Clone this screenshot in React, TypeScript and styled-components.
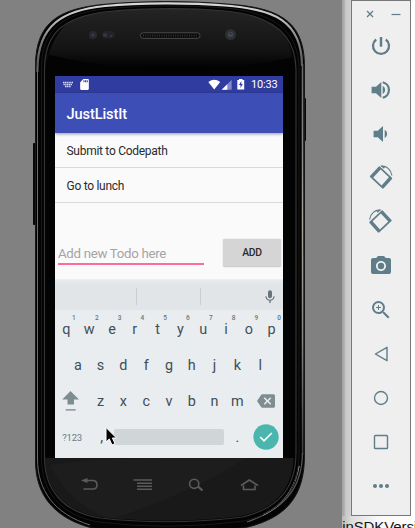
import React from "react";
import styled, { createGlobalStyle } from "styled-components";
import { MdCameraAlt, MdZoomIn, MdMic, MdBackspace, MdSdCard } from "react-icons/md";

const GlobalStyle = createGlobalStyle`
  * { box-sizing: border-box; }
  body { margin: 0; overflow: hidden; font-family: Roboto, sans-serif; background: #fff; }
  svg { display: block; flex: none; }
`;

const Desktop = styled.div`
  display: flex;
  width: 415px;
  height: 528px;
  overflow: hidden;
`;

const DeviceArea = styled.main`
  position: relative;
  width: 342px;
  flex: none;
  background: #818181;
  padding-top: 76px;
`;

const DeviceArt = styled.svg`
  position: absolute;
  left: 0;
  top: 0;
`;

const Screen = styled.section`
  position: relative;
  width: 228px;
  height: 382px;
  margin-left: 55px;
  background: #fafafa;
  display: flex;
  flex-direction: column;
  color: #2b2b2b;
`;

const StatusBar = styled.div`
  height: 17px;
  flex: none;
  background: #303c9f;
  display: flex;
  align-items: center;
  padding: 0 5.5px 0 8px;
  color: #fff;
`;

const StatusSpacer = styled.div`
  flex: 1;
`;

const SdCardSlot = styled.span`
  margin-left: 5px;
`;

const Clock = styled.span`
  margin-left: 5px;
  font-size: 11px;
  letter-spacing: -0.2px;
  line-height: 18px;
  padding-top: 1px;
`;

const AppBar = styled.header`
  height: 40px;
  flex: none;
  background: #3d4eb7;
  color: #fff;
  font-size: 14.6px;
  font-weight: 500;
  letter-spacing: -0.1px;
  line-height: 42px;
  padding-left: 11.5px;
  box-shadow: 0 1px 3px rgba(0, 0, 0, 0.4);
  z-index: 1;
`;

const TodoList = styled.ul`
  list-style: none;
  margin: 0;
  padding: 0;
  height: 97px;
  flex: none;
`;

const TodoItem = styled.li`
  height: 35px;
  border-bottom: 1px solid #dadada;
  padding-left: 11.5px;
  font-size: 12px;
  letter-spacing: -0.28px;
  line-height: 36px;

  & + & {
    line-height: 37px;
  }
`;

const EntryRow = styled.form`
  height: 49px;
  flex: none;
  display: flex;
  justify-content: space-between;
  align-items: flex-start;
  padding: 9px 2px 0 3px;
`;

const EntryField = styled.div`
  width: 146px;
  height: 26px;
  border-bottom: 2px solid #f96c9b;
  color: #a4a4a4;
  font-size: 13.25px;
  letter-spacing: -0.3px;
  line-height: 30px;
  white-space: nowrap;
`;

const AddButton = styled.button`
  width: 58px;
  height: 27px;
  border: 0;
  border-radius: 1.5px;
  padding: 0;
  background: #d5d5d5;
  color: #2b2b2b;
  font: 500 10.4px Roboto, sans-serif;
  letter-spacing: -0.25px;
  box-shadow: 0 0.5px 1.5px rgba(0, 0, 0, 0.22);
`;

const Keyboard = styled.div`
  flex: 1;
  display: flex;
  flex-direction: column;
  background: #e9edf0;
  border-top: 1px solid #eeeeee;
`;

const SuggestionStrip = styled.div`
  height: 30px;
  flex: none;
  background: linear-gradient(#e9ebec, #e1e5e8 4px);
  display: grid;
  grid-template-columns: 82px 64px 1fr;
  align-items: center;
`;

const Suggestion = styled.div`
  height: 17px;
  margin-top: 3px;
  border-right: 1px solid #c9ced1;
`;

const MicSlot = styled.div`
  display: flex;
  justify-content: flex-end;
  padding: 3px 5px 0 0;
  color: #66757c;
`;

const KeyRows = styled.div`
  padding-top: 1px;
`;

const KeyRow = styled.div<{ $inset?: number }>`
  height: 36px;
  display: flex;
  align-items: center;
  padding: 0 ${(p) => p.$inset ?? 0}px;
`;

const Key = styled.div<{ $width?: number; $small?: boolean }>`
  position: relative;
  width: ${(p) => p.$width ?? 22.8}px;
  flex: none;
  display: flex;
  justify-content: center;
  padding-top: ${(p) => (p.$small ? 1 : 2)}px;
  font-size: ${(p) => (p.$small ? 9.5 : 14.4)}px;
  letter-spacing: ${(p) => (p.$small ? "-0.15px" : "0")};
  line-height: 20px;
  color: ${(p) => (p.$small ? "#6d7b82" : "#3f4f57")};
`;

const IconKey = styled.div<{ $width: number }>`
  width: ${(p) => p.$width}px;
  flex: none;
  display: flex;
  justify-content: center;
`;

const KeyHint = styled.span`
  position: absolute;
  right: 2px;
  top: -3px;
  font-size: 6.5px;
  font-weight: 500;
  line-height: 7px;
  color: #66767d;
`;

const SpaceBar = styled.div`
  width: 110px;
  height: 16px;
  border-radius: 2px;
  background: #d0d5d8;
`;

const Cursor = styled.svg`
  position: absolute;
  left: 49px;
  top: 350px;
`;

const Side = styled.aside`
  width: 73px;
  display: flex;
  flex-direction: column;
`;

const SideTop = styled.div`
  height: 516px;
  flex: none;
  display: flex;
`;

const WindowEdge = styled.div`
  width: 9px;
  background: linear-gradient(90deg, #a5a5a5 0 1px, #bababa 3px, #cccccc 4px 7px, #d5d5d5);
`;

const Toolbar = styled.nav`
  width: 60px;
  background: #efefef;
  border: 1px solid #777;
  display: flex;
  flex-direction: column;
  align-items: center;
  color: #607d8a;
`;

const WindowControls = styled.div`
  height: 23px;
  width: 100%;
  flex: none;
  display: flex;
  align-items: center;
  gap: 17px;
  padding: 3px 0 0 14px;
`;

const ToolButton = styled.button`
  width: 44px;
  height: 44px;
  flex: none;
  display: grid;
  place-items: center;
  background: none;
  border: 0;
  padding: 0;
  color: inherit;
`;

const CodeLine = styled.div`
  height: 12px;
  overflow: hidden;
  background: linear-gradient(90deg, #bbb, #ddd 10px, #f8f8f8 35px, #fff);
  color: #151515;
  font: 15px/18px "Liberation Sans", sans-serif;
  letter-spacing: -0.1px;
  white-space: nowrap;
  display: flex;
`;

const CodeText = styled.span`
  margin: 2px 0 0 -8px;
`;

const HULL =
  "M35.5 66C35.5 20 62 9 102 4.5C140 .8 190 .8 224 3.8C275 7 304.5 18 304.5 66V455C304.5 496 287 517 248 527Q170 540 92 528C54 518 35.5 495 35.5 461Z";

const DeviceFrame = () => (
  <DeviceArt width="342" height="528" viewBox="0 0 342 528" fill="none">
    <defs>
      <linearGradient id="glassTop" x1="0" y1="0" x2="0" y2="1">
        <stop offset="0" stopColor="#242424" />
        <stop offset=".65" stopColor="#141414" />
        <stop offset="1" stopColor="#000" />
      </linearGradient>
      <linearGradient id="rim" x1="0" y1="0" x2="0" y2="1">
        <stop offset="0" stopColor="#d8d8d8" />
        <stop offset=".25" stopColor="#b8b8b8" />
        <stop offset=".6" stopColor="#777" />
        <stop offset="1" stopColor="#555" />
      </linearGradient>
      <linearGradient id="rightRim" gradientUnits="userSpaceOnUse" x1="0" y1="64" x2="0" y2="455">
        <stop offset="0" stopColor="#666" />
        <stop offset=".4" stopColor="#a8a29c" />
        <stop offset=".7" stopColor="#8a8682" />
        <stop offset="1" stopColor="#3c3c3c" />
      </linearGradient>
      <clipPath id="inner">
        <path d="M45 70C45 30 66 16 105 12C145 8 190 8 225 11C270 15 294 32 294 70V452C294 488 277 508 242 516Q170 525 100 517C63 511 45 488 45 457Z" />
      </clipPath>
    </defs>
    <rect x="33" y="143" width="4" height="82" rx="1" fill="#080808" />
    <rect x="303" y="98" width="3" height="43" rx="1" fill="#080808" />
    <path d={HULL} fill="#030303" stroke="#171717" strokeWidth="1" />
    <path d="M37.5 72C36.5 24 64 10 105 6C140 2.5 190 2.5 225 5.5C273 9 302 20 302 66" stroke="url(#rim)" strokeWidth="2.2" />
    <path d="M37.5 66V459C37.5 490 54 514 90 525" stroke="#6b6b6b" strokeWidth="1" />
    <path d="M302.5 64L302.6 455" stroke="url(#rightRim)" strokeWidth="1.6" />
    <path d="M302.5 453C302 489 284 509 247 522" stroke="#555" strokeWidth="1.3" />
    <path d="M299 466C295 489 284 505 263 515" stroke="#999" strokeWidth="1.4" />
    <g clipPath="url(#inner)">
      <path d="M45 70Q55 9 110 9H240Q291 15 294 70V57Q170 84 45 54Z" fill="url(#glassTop)" />
      <path d="M45 458H294V525H45Z" fill="#191919" />
      <path d="M50 465Q90 458 165 458H245Q205 487 110 520Q65 500 50 465Z" fill="#1d1d1d" />
    </g>
    <path d="M44.5 70C44.5 32 64 18 104 12C145 8 190 8 225 11C271 15 296 34 296 70V452C296 488 279 508 243 517Q170 526 100 518C62 512 44.5 489 44.5 457Z" stroke="#343434" strokeWidth="1.2" />
    <path d="M41.5 69C41.5 28 64 14 104 9C145 5 190 5 225 8C273 12 299 31 299 69V453C299 491 281 512 244 521Q170 531 98 522C60 515 41.5 491 41.5 458Z" stroke="#181818" />
    <circle cx="93" cy="35" r="4" fill="#292a2f" />
    <circle cx="93" cy="35" r="1.3" fill="#3c3e4c" />
    <rect x="102" y="31" width="13" height="7.5" rx="3.7" fill="#222328" />
    <circle cx="105" cy="35" r="2" fill="#343646" />
    <circle cx="111" cy="36" r="1" fill="#3b3d4b" />
    <rect x="140.5" y="32.8" width="59.5" height="5.5" rx="2.7" fill="#080808" stroke="#4d4d4d" />
    <path d="M143 35.6H198" stroke="#383838" strokeWidth="2" strokeDasharray="1 1.3" />
    <circle cx="230.5" cy="34.5" r="5.5" fill="#2d2f34" />
    <circle cx="230.5" cy="34.5" r="2.8" fill="#414550" />
    <circle cx="230.5" cy="33.5" r=".8" fill="#222" />
    <g stroke="#5b5b5b" strokeWidth="1.6">
      <path d="M87 480.5H93.5Q97 481 97 485T93 489H83.5" />
      <path d="M81 480.5L87.500 478V483Z" fill="#5b5b5b" stroke="none" />
      <path d="M133.5 480H152M137 483.3H152M137 486.3H152M137 489.3H152" />
      <circle cx="194.2" cy="483.8" r="4.6" />
      <path d="M198 486.5L202.5 490.5" strokeWidth="2.3" />
      <path d="M241 485.5L249.3 480L258 485.5M243.5 485.5V489.5H255V485.5" />
    </g>
  </DeviceArt>
);

const KeyboardGlyph = () => (
  <svg width="10" height="8" viewBox="0 0 10 8">
    <path d="M0 1.5H10M.5 3.5H9.5M2 5.5H8" stroke="#d9dcf2" strokeWidth="1.4" strokeDasharray="1.3 .5" />
  </svg>
);

const StatusGlyphs = () => (
  <svg width="38" height="13" viewBox="0 0 38 13">
    <path d="M.3 4Q6.2-.3 12.2 4L6.2 11.500Z" fill="#fff" />
    <path d="M23.7 1.8V11.8H13.7Z" fill="#8189c8" />
    <path d="M19.3 6.2V11.8H13.7Z" fill="#fff" />
    <path d="M31 1H34.5V2H36.2V11.5H29.3V2H31Z" fill="#fff" />
    <path d="M33.300 3L31 7H32.500V10L34.800 6H33.300Z" fill="#303c9f" />
  </svg>
);

const PowerGlyph = () => (
  <svg width="24" height="24" viewBox="0 0 24 24" fill="none" stroke="currentColor">
    <path d="M12 3V12.700" strokeWidth="2.500" />
    <path d="M7.200 5.500A8 8 0 1 0 16.800 5.500" strokeWidth="2.300" />
  </svg>
);

const VolumeUpGlyph = () => (
  <svg width="24" height="24" viewBox="0 0 24 24" fill="none" stroke="currentColor">
    <path d="M2.600 8.700V15.300H7L12.300 20V4L7 8.700Z" fill="currentColor" stroke="none" />
    <path d="M13.700 7.800A4.800 4.800 0 0 1 13.700 16.200Z" fill="currentColor" stroke="none" />
    <path d="M13.700 4.200A8 8 0 0 1 13.700 19.800" strokeWidth="2.200" />
  </svg>
);

const VolumeDownGlyph = () => (
  <svg width="24" height="24" viewBox="0 0 24 24" fill="currentColor">
    <path d="M4.600 8.800V15.200H8.800L14 20V4L8.800 8.800Z" />
    <path d="M15.700 7.800A4.800 4.800 0 0 1 15.700 16.200Z" />
  </svg>
);

const RotateGlyph = ({ flipped = false }: { flipped?: boolean }) => (
  <svg width="24" height="26" viewBox="0 0 24 26" fill="currentColor">
    <g transform={flipped ? "translate(23.5 0) scale(-1 1)" : undefined}>
      <path fillRule="evenodd" d="M9.800 1.400Q10.300 1 10.900 1.400L23 12.800Q23.400 13.400 23 14L14.500 23.400Q13.900 23.800 13.300 23.400L1 12Q.7 11.400 1 10.900ZM11.700 4.400L4.200 12.500L12.600 20.400L19.900 12.200Z" />
      <path d="M12 1.200C17.500.5 22 4.500 22.900 10.500" fill="none" stroke="currentColor" strokeWidth="1.200" />
      <path d="M11.500.6L16.500 1.200L14.800 3.800Z" />
    </g>
  </svg>
);

const BackGlyph = () => (
  <svg width="16" height="18" viewBox="0 0 16 18" fill="none" stroke="currentColor" strokeWidth="1.4">
    <path d="M14 2.300V15.700L2.400 9Z" strokeLinejoin="round" />
  </svg>
);

const HomeGlyph = () => (
  <svg width="16" height="16" viewBox="0 0 16 16" fill="none" stroke="currentColor" strokeWidth="1.4">
    <circle cx="8" cy="8" r="6.5" />
  </svg>
);

const OverviewGlyph = () => (
  <svg width="16" height="16" viewBox="0 0 16 16" fill="none" stroke="currentColor" strokeWidth="1.4">
    <rect x="1.5" y="1.5" width="13" height="13" rx=".8" />
  </svg>
);

const MoreGlyph = () => (
  <svg width="18" height="6" viewBox="0 0 18 6" fill="currentColor">
    <circle cx="3" cy="3" r="2" />
    <circle cx="9" cy="3" r="2" />
    <circle cx="15" cy="3" r="2" />
  </svg>
);

const tools: { name: string; icon: React.ReactNode }[] = [
  { name: "Power", icon: <PowerGlyph /> },
  { name: "Volume up", icon: <VolumeUpGlyph /> },
  { name: "Volume down", icon: <VolumeDownGlyph /> },
  { name: "Rotate left", icon: <RotateGlyph /> },
  { name: "Rotate right", icon: <RotateGlyph flipped /> },
  { name: "Take screenshot", icon: <MdCameraAlt size={24} /> },
  { name: "Zoom", icon: <MdZoomIn size={24} /> },
  { name: "Back", icon: <BackGlyph /> },
  { name: "Home", icon: <HomeGlyph /> },
  { name: "Overview", icon: <OverviewGlyph /> },
  { name: "More", icon: <MoreGlyph /> },
];

const topKeys = ["q", "w", "e", "r", "t", "y", "u", "i", "o", "p"];
const homeKeys = ["a", "s", "d", "f", "g", "h", "j", "k", "l"];
const lowerKeys = ["z", "x", "c", "v", "b", "n", "m"];

export default function App() {
  return (
    <>
      <GlobalStyle />
      <Desktop>
        <DeviceArea>
          <DeviceFrame />
          <Screen>
            <StatusBar>
              <KeyboardGlyph />
              <SdCardSlot><MdSdCard size={13} /></SdCardSlot>
              <StatusSpacer />
              <StatusGlyphs />
              <Clock>10:33</Clock>
            </StatusBar>
            <AppBar>JustListIt</AppBar>
            <TodoList>
              <TodoItem>Submit to Codepath</TodoItem>
              <TodoItem>Go to lunch</TodoItem>
            </TodoList>
            <EntryRow>
              <EntryField>Add new Todo here</EntryField>
              <AddButton type="button">ADD</AddButton>
            </EntryRow>
            <Keyboard>
              <SuggestionStrip>
                <Suggestion />
                <Suggestion />
                <MicSlot><MdMic size={16} /></MicSlot>
              </SuggestionStrip>
              <KeyRows>
                <KeyRow>
                  {topKeys.map((key, i) => (
                    <Key key={key}>{key}<KeyHint>{(i + 1) % 10}</KeyHint></Key>
                  ))}
                </KeyRow>
                <KeyRow $inset={11.4}>
                  {homeKeys.map((key) => <Key key={key}>{key}</Key>)}
                </KeyRow>
                <KeyRow>
                  <IconKey $width={34.2}>
                    <svg width="20" height="20" viewBox="0 0 20 20" fill="#7f8d93">
                      <path d="M8.500 0L17 8.500H12V13.500H5.500V8.500H.2Z" />
                      <path d="M3.700 18H13.700V19.700H3.700Z" fill="#94a0a5" />
                    </svg>
                  </IconKey>
                  {lowerKeys.map((key) => <Key key={key}>{key}</Key>)}
                  <IconKey $width={34.2}><MdBackspace size={18} color="#7f8d93" /></IconKey>
                </KeyRow>
                <KeyRow>
                  <Key $width={34.2} $small>?123</Key>
                  <Key $width={24.8}>,</Key>
                  <SpaceBar />
                  <Key $width={27}>.</Key>
                  <IconKey $width={30}>
                    <svg width="26" height="26" viewBox="0 0 26 26" fill="none">
                      <circle cx="13" cy="13" r="12.7" fill="#4bb6ad" />
                      <path d="M7.200 13L11 16.800L18.800 9" stroke="#fff" strokeWidth="1.7" />
                    </svg>
                  </IconKey>
                </KeyRow>
              </KeyRows>
            </Keyboard>
            <Cursor width="14" height="22" viewBox="0 0 14 22">
              <path d="M2 1.500V16L5.300 13L8 19L11 17.600L8.400 12H12.500Z" fill="#050505" stroke="#fff" strokeWidth="1" />
            </Cursor>
          </Screen>
        </DeviceArea>
        <Side>
          <SideTop>
            <WindowEdge />
            <Toolbar>
              <WindowControls>
                <svg width="8" height="8" viewBox="0 0 8 8" stroke="currentColor" strokeWidth="1.3"><path d="M1 1L7 7M7 1L1 7" /></svg>
                <svg width="10" height="4" viewBox="0 0 10 4" stroke="currentColor" strokeWidth="1.2"><path d="M.5 2.500H9.500" /></svg>
              </WindowControls>
              {tools.map((tool) => <ToolButton key={tool.name} aria-label={tool.name}>{tool.icon}</ToolButton>)}
            </Toolbar>
          </SideTop>
          <CodeLine><CodeText>ainSDKVersion</CodeText></CodeLine>
        </Side>
      </Desktop>
    </>
  );
}
